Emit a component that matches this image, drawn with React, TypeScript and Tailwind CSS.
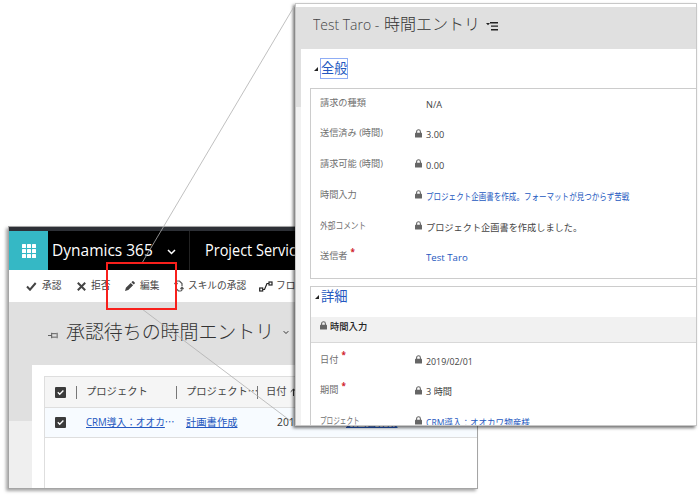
import React from "react";

const ui = "font-['Open_Sans','Noto_Sans_CJK_JP',sans-serif]";

function Lock() {
  return (
    <svg className="block h-[9px] w-[7px] shrink-0" viewBox="0 0 7 9" fill="none">
      <path d="M1.6 4V2.7a1.9 1.9 0 0 1 3.8 0V4" stroke="#666" strokeWidth="1.1" />
      <rect x="0" y="3.7" width="7" height="4.8" rx=".5" fill="#666" />
    </svg>
  );
}

function Checkbox() {
  return (
    <svg className="block size-[11px] shrink-0" viewBox="0 0 11 11" fill="none">
      <rect width="11" height="11" rx="1" fill="#3b3b3b" />
      <path d="M2.8 5.3 4.7 7.3 8.4 3.5" stroke="#fff" strokeWidth="1.3" />
    </svg>
  );
}

function Chevron({ className }: { className: string }) {
  return (
    <svg className={"block shrink-0 " + className} viewBox="0 0 9 6" fill="none">
      <path d="m1 1 3.5 3.5L8 1" stroke="currentColor" strokeWidth="1.5" />
    </svg>
  );
}

function Caret() {
  return (
    <svg className="block size-[4px] shrink-0" viewBox="0 0 4 4">
      <path d="M4 0v4H0z" fill="#222" />
    </svg>
  );
}

type FieldProps = {
  label: string;
  value: string;
  lock?: boolean;
  required?: boolean;
  link?: boolean;
  labelClass?: string;
  valueClass?: string;
};

function Field({ label, value, lock, required, link, labelClass = "", valueClass = "" }: FieldProps) {
  return (
    <div className="flex h-[30.8px] items-center pl-[9px] whitespace-nowrap">
      <div className="flex w-[95px] shrink-0 items-center text-[9.2px] text-[#707070]">
        <span className={"origin-left " + labelClass}>{label}</span>
        {required && <span className="-mt-[8px] ml-[3px] text-[8px] leading-none font-bold text-[#d0202a]">*</span>}
      </div>
      <div className="flex w-[11px] shrink-0">{lock && <Lock />}</div>
      <span className={"mt-[4px] origin-left text-[9.2px] " + (link ? "text-[#2458c0] " : "text-[#444] ") + valueClass}>
        {value}
      </span>
    </div>
  );
}

function ListWindow() {
  return (
    <div className="absolute top-[226px] left-[8px] flex h-[263px] w-[470px] flex-col overflow-hidden border border-[#a5a5a5] bg-white shadow-[-2px_2px_3px_rgba(0,0,0,0.35)]">
      <div className="h-[4px] shrink-0 bg-[#2d3036]" />
      <div className="flex h-[39px] shrink-0 items-center bg-black whitespace-nowrap text-white">
        <div className="flex h-full w-[39px] items-center justify-center bg-[#35b8c5]">
          <div className="grid grid-cols-3 gap-[1px]">
            {Array.from({ length: 9 }, (_, i) => (
              <i key={i} className="size-[4px] rounded-[0.5px] bg-white" />
            ))}
          </div>
        </div>
        <div className="w-[110px] pl-[4px] text-[15.5px]">
          <span className="inline-block origin-left">Dynamics 365</span>
        </div>
        <div className="flex w-[31px] pl-[9px]">
          <Chevron className="mt-[3px] h-[6px] w-[9px]" />
        </div>
        <div className="flex h-full items-center border-l border-[#222] pl-[15px] text-[15.5px]">
          <span className="origin-left scale-x-[0.935]">Project Service</span>
        </div>
      </div>
      <div className="flex h-[32px] shrink-0 items-center bg-white pl-[17px] text-[9.7px] whitespace-nowrap text-[#444]">
        <svg className="h-[9px] w-[11px]" viewBox="0 0 11 9" fill="none">
          <path d="m1 4.5 3 3.2L9.7 1" stroke="#444" strokeWidth="2" />
        </svg>
        <span className="ml-[5px] w-[35px]">承認</span>
        <svg className="h-[9px] w-[9px]" viewBox="0 0 9 9" fill="none">
          <path d="m.8.8 7.4 7.4M8.2.8.8 8.2" stroke="#444" strokeWidth="2" />
        </svg>
        <span className="ml-[5px] w-[34px]">拒否</span>
        <svg className="h-[10px] w-[10px]" viewBox="0 0 10 10" fill="#444">
          <path d="m0 10 .9-3.3 4.8-4.8 2.4 2.4-4.8 4.8zM6.4 1.2 7.4.3q.5-.5 1 0l1.3 1.3q.5.5 0 1l-.9 1z" />
        </svg>
        <span className="ml-[5px] w-[34px]">編集</span>
        <svg className="h-[12px] w-[10px]" viewBox="0 0 10 12" fill="none" stroke="#555" strokeWidth="1.2">
          <path d="M2 4V2.5Q2 1 3.5 1h2L8 3.5V6M.5 3 2 4.8 3.5 3M8 8v1.5Q8 11 6.5 11h-2L2 8.5V7M9.5 9 8 7.2 6.5 9" />
        </svg>
        <span className="ml-[4px] w-[71px]">スキルの承認</span>
        <svg className="h-[11px] w-[14px] shrink-0" viewBox="0 0 14 11" fill="none" stroke="#222" strokeWidth="1.2">
          <rect x=".7" y="7" width="3" height="3" />
          <rect x="10" y="1" width="3" height="3" />
          <path d="M4 8.5h1.5L8 2.5h2" />
        </svg>
        <span className="ml-[3px]">フロー</span>
      </div>
      <div className="flex min-h-0 grow bg-[#e0e0e0]">
        <div className="flex w-[23px] shrink-0 flex-col justify-end">
          <div className="h-[67px] bg-[#efefef]" />
        </div>
        <div className="flex grow flex-col">
          <div className="flex h-[63px] shrink-0 items-center pb-[2px] pl-[16px] whitespace-nowrap text-[#333]">
            <svg className="mt-[6px] h-[7px] w-[11px]" viewBox="0 0 12 7" fill="none" stroke="#555">
              <path d="M0 3.5h4M4 .5v6M4 1.5h5.5M4 5.3h5.5M10 .5v6" />
            </svg>
            <h1 className="ml-[7px] text-[19px] leading-none font-light tracking-[-0.08px]">承認待ちの時間エントリ</h1>
            <Chevron className="ml-[9px] h-[5px] w-[6px]" />
          </div>
          <div className="grow bg-white pt-[11px] pl-[12px]">
            <div className="h-full border-t border-l border-[#dedede] whitespace-nowrap">
              <div className="flex h-[31px] items-center border-b border-[#dedede] bg-[#f5f5f5] pl-[10px] text-[10.3px] text-[#444]">
                <Checkbox />
                <i className="ml-[10px] h-[13px] w-px bg-[#777]" />
                <span className="ml-[9px] w-[90px]">プロジェクト</span>
                <i className="h-[13px] w-px bg-[#777]" />
                <span className="ml-[9px] w-[71px]">プロジェクト⋯</span>
                <i className="h-[13px] w-px bg-[#777]" />
                <span className="ml-[8px]">日付</span>
                <svg className="ml-[3px] h-[8px] w-[7px]" viewBox="0 0 7 8" fill="none" stroke="#333">
                  <path d="M3.5 8V1M.7 3.8 3.5 1l2.8 2.8" />
                </svg>
              </div>
              <div className="flex h-[30px] items-center border-b border-[#dedede] bg-[#f7fbff] pl-[10px] text-[10.3px] text-[#2458c0]">
                <Checkbox />
                <span className="ml-[20px] w-[100px]">
                  <span className="inline-block origin-left scale-x-[0.94]"><u>CRM導入：オオカ</u>⋯</span>
                </span>
                <u className="w-[91px]">計画書作成</u>
                <span className="w-[69px] text-[#333]">2019/02/01</span>
                <u>計画書作成</u>
              </div>
            </div>
          </div>
        </div>
      </div>
    </div>
  );
}

function EntryWindow() {
  return (
    <div className="absolute top-[3px] left-[295px] flex h-[423px] w-[402px] flex-col overflow-hidden border border-[#c8c8c8] bg-white pt-[3px] shadow-[-2px_2px_3px_rgba(0,0,0,0.55)]">
      <div className="flex h-[42px] shrink-0 items-center bg-[#e0e0e0] pl-[17px] whitespace-nowrap text-[#444]">
        <h2 className="flex w-[168px] items-baseline pb-[9px] leading-none font-light">
          <span className="w-[71px] shrink-0 text-[15px]">
            <span className="inline-block origin-left scale-x-[0.93]">Test Taro -</span>
          </span>
          <span className="text-[16px] text-[#333]">時間エントリ</span>
        </h2>
        <svg className="mb-[4px] ml-[5px] h-[9px] w-[13px]" viewBox="0 0 13 9">
          <path d="M0 1h4L2 3.2zM4 0h8v1.4H4zM5 3.5h7v1.3H5zM5 7h7v1.4H5z" fill="#222" />
        </svg>
      </div>
      <div className="flex min-h-0 grow">
        <div className="flex w-[5px] shrink-0 flex-col bg-[#f2f2f2]">
          <div className="h-[58px] bg-[#e0e0e0]" />
        </div>
        <div className="grow pl-[9px]">
          <div className="flex h-[39px] items-center pl-[4px]">
            <Caret />
            <h3 className="ml-[2px] border border-[#8fadf5] text-[13.2px] leading-[19px] text-[#2458c0]">全般</h3>
          </div>
          <section className="h-[191px] border-b border-l border-t border-[#ccc]">
            <div className="-mt-[2px]">
              <Field label="請求の種類" value="N/A" />
              <Field label="送信済み (時間)" value="3.00" lock />
              <Field label="請求可能 (時間)" value="0.00" lock />
              <Field label="時間入力" value="プロジェクト企画書を作成。フォーマットが見つからず苦戦" lock link valueClass="scale-x-[0.82]" />
              <Field label="外部コメント" value="プロジェクト企画書を作成しました。" lock labelClass="scale-x-[0.84]" />
              <Field label="送信者" value="Test Taro" required link valueClass="scale-x-[1.05]" />
            </div>
          </section>
          <section className="mt-[7px] border-t border-l border-[#ccc]">
            <div className="flex h-[30px] items-center pb-[10px] pl-[4px]">
              <Caret />
              <h3 className="ml-[2px] text-[13.3px] leading-none text-[#2458c0]">詳細</h3>
            </div>
            <div className="flex h-[26px] items-center border-b border-[#d8d8d8] bg-[#f1f1f1] pb-[8px] pl-[9px] text-[9.3px] font-medium text-[#222]">
              <Lock />
              <span className="mt-[2px] ml-[3px]">時間入力</span>
            </div>
            <div className="pt-px">
              <Field label="日付" value="2019/02/01" lock required valueClass="scale-x-[0.96]" />
              <Field label="期間" value="3 時間" lock required />
              <Field label="プロジェクト" value="CRM導入：オオカワ物産様" lock link labelClass="scale-x-[0.72]" valueClass="underline scale-x-[0.93]" />
            </div>
          </section>
        </div>
      </div>
    </div>
  );
}

export default function App() {
  return (
    <main className={"relative h-[495px] w-[700px] overflow-hidden bg-white " + ui}>
      <ListWindow />
      <EntryWindow />
      <svg className="absolute top-0 left-0 h-[495px] w-[700px]" viewBox="0 0 700 495" fill="none" stroke="#b0b0b0" strokeWidth=".8">
        <path d="M142 263 295 5M142 309 292 422" />
      </svg>
      <div className="absolute top-[262px] left-[106px] h-[48px] w-[71px] border-2 border-[#f8201c]" />
    </main>
  );
}
